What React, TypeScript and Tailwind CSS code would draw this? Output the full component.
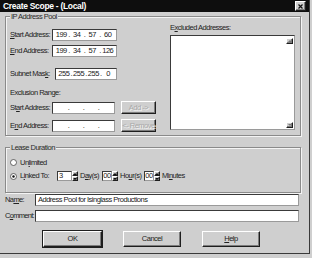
import React from 'react';

const sunken = 'bg-white border border-t-[#3a3a3a] border-l-[#3a3a3a] border-b-[#9a9a9a] border-r-[#9a9a9a]';
const raised =
  'border border-t-white border-l-white border-b-[#1e1e1e] border-r-[#1e1e1e] shadow-[inset_-1px_-1px_0_#7c7c7c] bg-[#cfcfcf]';

function IpBox({ parts, w }: { parts?: string[]; w: string }) {
  const p = parts || ['', '', '', ''];
  return (
    <div className={`${sunken} ${w} h-[12px] flex items-center px-[2px] text-[#222]`}>
      {p.map((v, i) => (
        <React.Fragment key={i}>
          <span className="flex-1 text-center">{v}</span>
          {i < 3 && <span className="w-[3px] text-center">.</span>}
        </React.Fragment>
      ))}
    </div>
  );
}

function Btn({ children, disabled, def, w }: { children: React.ReactNode; disabled?: boolean; def?: boolean; w: string }) {
  return (
    <div
      className={`${raised} ${w} h-full flex items-center justify-center ${
        disabled ? 'text-[#a9a9a9] [text-shadow:1px_1px_0_#f4f4f4]' : 'text-[#222]'
      } ${def ? 'outline outline-1 outline-[#1e1e1e]' : ''}`}
    >
      {children}
    </div>
  );
}

function Spin() {
  return (
    <div className="w-[6px] h-[10px] flex flex-col">
      {[0, 1].map((i) => (
        <div key={i} className={`${raised} flex-1 flex items-center justify-center`}>
          <svg width="4" height="2" viewBox="0 0 4 2">
            <path d={i === 0 ? 'M0 2 L2 0 L4 2 Z' : 'M0 0 L2 2 L4 0 Z'} fill="#111" />
          </svg>
        </div>
      ))}
    </div>
  );
}

function Radio({ on }: { on?: boolean }) {
  return (
    <svg width="7" height="7" viewBox="0 0 7 7" className="shrink-0">
      <circle cx="3.5" cy="3.5" r="3" fill="#fff" stroke="#444" strokeWidth="0.8" />
      {on && <circle cx="3.5" cy="3.5" r="1.2" fill="#111" />}
    </svg>
  );
}

function ScrollArrow({ up }: { up?: boolean }) {
  return (
    <div className={`${raised} w-[7px] h-[6px] flex items-center justify-center`}>
      <svg width="4" height="2" viewBox="0 0 4 2">
        <path d={up ? 'M0 2 L2 0 L4 2 Z' : 'M0 0 L2 2 L4 0 Z'} fill="#777" />
      </svg>
    </div>
  );
}

const group = 'border border-[#8a8a8a] shadow-[1px_1px_0_#f4f4f4,inset_1px_1px_0_#f4f4f4]';
const legend = 'ml-[4px] px-[1px] bg-[#cfcfcf] leading-[9px] text-[#2a2a2a]';

export default function App() {
  return (
    <div className="w-[312px] h-[258px] bg-[#cfcfcf] font-['Liberation_Sans',Arial,sans-serif] text-[7.5px] tracking-[-0.5px] text-[#222] leading-none overflow-hidden">
      <div className="w-[310px] h-[254px] border-r border-b border-[#3a3a3a]">
        {/* title bar */}
        <div className="h-[12px] bg-[#0e0e0e] flex items-center justify-between pl-[3px] pr-[3px]">
          <span className="text-white font-bold text-[8.5px] tracking-[-0.3px]">Create Scope - (Local)</span>
          <div className={`${raised} w-[11px] h-[10px] flex items-center justify-center`}>
            <svg width="5" height="5" viewBox="0 0 5 5">
              <path d="M0.5 0.5 L4.5 4.5 M4.5 0.5 L0.5 4.5" stroke="#111" strokeWidth="1.2" />
            </svg>
          </div>
        </div>

        <div className="pl-[5px] w-[301px]">
          {/* IP Address Pool */}
          <fieldset className={`${group} h-[124px] flex`}>
            <legend className={legend}>IP Address Pool</legend>
            <div className="flex w-full">
              <div className="pl-[4px] w-[151px]">
                <div className="mt-[8px] h-[12px] flex items-center">
                  <span className="w-[42px]"><u>S</u>tart Address:</span>
                  <IpBox w="w-[65px]" parts={['199', '34', '57', '60']} />
                </div>
                <div className="mt-[4px] h-[12px] flex items-center">
                  <span className="w-[42px]"><u>E</u>nd Address:</span>
                  <IpBox w="w-[65px]" parts={['199', '34', '57', '126']} />
                </div>
                <div className="mt-[11px] h-[12px] flex items-center">
                  <span className="w-[45px]">Subnet Mas<u>k</u>:</span>
                  <IpBox w="w-[62px]" parts={['255', '255', '255', '0']} />
                </div>
                <div className="mt-[8px] h-[9px] flex items-center">Exclusion Range:</div>
                <div className="mt-[4px] h-[13px] flex items-center">
                  <span className="w-[42px]">St<u>a</u>rt Address:</span>
                  <IpBox w="w-[63px]" />
                  <div className="ml-[6px] h-full">
                    <Btn disabled w="w-[35px]">Add -&gt;</Btn>
                  </div>
                </div>
                <div className="mt-[5px] h-[13px] flex items-center">
                  <span className="w-[42px]">E<u>n</u>d Address:</span>
                  <IpBox w="w-[63px]" />
                  <div className="ml-[6px] h-full">
                    <Btn disabled w="w-[35px]">&lt;- Remove</Btn>
                  </div>
                </div>
              </div>
              <div className="ml-[13px]">
                <div className="mt-[2px] h-[9px] flex items-center">E<u>x</u>cluded Addresses:</div>
                <div className={`${sunken} mt-[3px] w-[125px] h-[95px] flex justify-end`}>
                  <div className="w-[8px] flex flex-col justify-between pt-[2px] pb-[1px] pr-[1px]">
                    <ScrollArrow up />
                    <ScrollArrow />
                  </div>
                </div>
              </div>
            </div>
          </fieldset>

          {/* Lease Duration */}
          <fieldset className={`${group} mt-[7px] h-[50px]`}>
            <legend className={legend}>Lease Duration</legend>
            <div className="pl-[4px]">
              <div className="mt-[6px] h-[9px] flex items-center gap-[3px]">
                <Radio />
                <span>Un<u>l</u>imited</span>
              </div>
              <div className="mt-[4px] h-[10px] flex items-center">
                <Radio on />
                <span className="ml-[3px] w-[37px]">L<u>i</u>nked To:</span>
                <div className={`${sunken} w-[15px] h-[10px] px-[1px] flex items-center`}>3</div>
                <Spin />
                <span className="ml-[2px] w-[22px]">D<u>a</u>y(s)</span>
                <div className={`${sunken} w-[10px] h-[10px] flex items-center justify-center`}>00</div>
                <Spin />
                <span className="ml-[2px] w-[24px]">Ho<u>u</u>r(s)</span>
                <div className={`${sunken} w-[10px] h-[10px] flex items-center justify-center`}>00</div>
                <Spin />
                <span className="ml-[2px]">Mi<u>n</u>utes</span>
              </div>
            </div>
          </fieldset>

          {/* Name / Comment */}
          <div className="mt-[1px] h-[12px] flex items-center">
            <span className="w-[30px] tracking-[-0.6px]">Na<u>m</u>e:</span>
            <div className={`${sunken} w-[264px] h-[12px] px-[2px] flex items-center`}>
              Address Pool for Isinglass Productions
            </div>
          </div>
          <div className="mt-[4px] h-[12px] flex items-center">
            <span className="w-[30px] tracking-[-0.7px]">C<u>o</u>mment:</span>
            <div className={`${sunken} w-[264px] h-[12px]`} />
          </div>

          {/* buttons */}
          <div className="mt-[9px] h-[16px] flex pl-[38px] gap-[21px]">
            <Btn def w="w-[59px]">OK</Btn>
            <Btn w="w-[58px]">Cancel</Btn>
            <Btn w="w-[58px]"><u>H</u>elp</Btn>
          </div>
        </div>
      </div>
    </div>
  );
}
